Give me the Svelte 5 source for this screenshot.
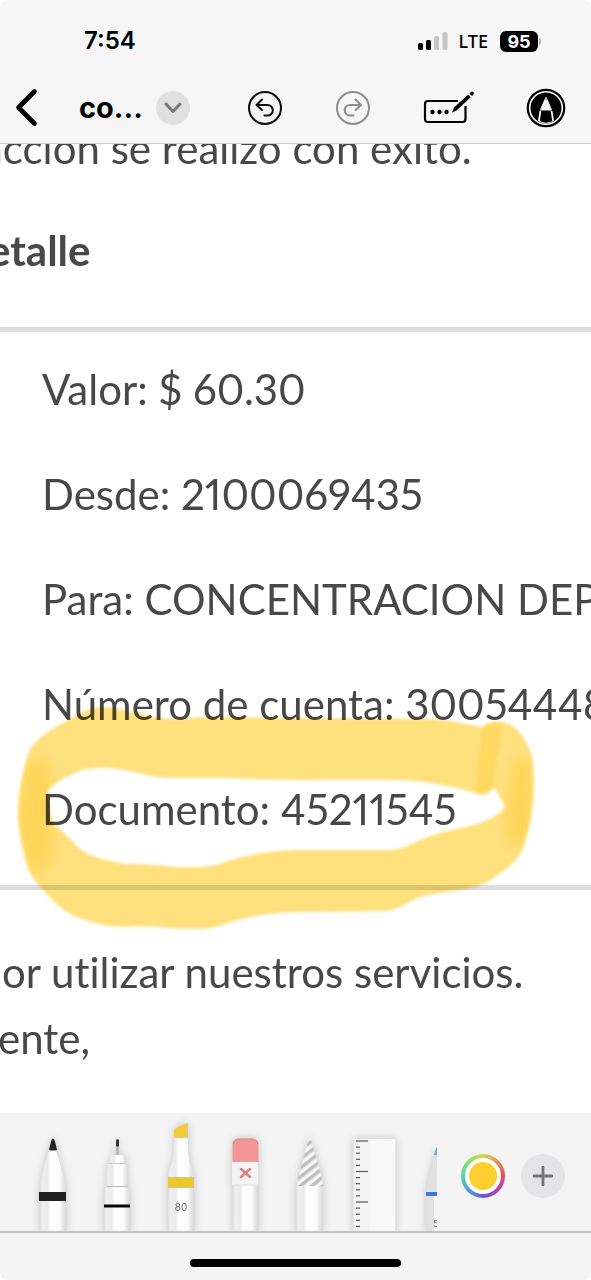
<script>
  const rows = [
    ['Valor', '$ 60.30'],
    ['Desde', '2100069435'],
    ['Para', 'CONCENTRACION DEPORTIVA'],
    ['Número de cuenta', '3005444804']
  ];
  const ticks = Array.from({ length: 15 }, (_, i) => ({ y: 28 + i * 6.1, long: i % 5 === 0 }));
</script>

<main class="screen">
  <header>
    <div class="status">
      <time>7:54</time>
      <div class="indicators">
        <svg width="30" height="20" viewBox="0 0 30 20" aria-hidden="true">
          <rect x="0" y="12" width="5" height="7" rx="1.5" />
          <rect x="8" y="9" width="5" height="10" rx="1.5" />
          <rect x="16" y="5" width="5" height="14" rx="1.5" fill="#c6c6c6" />
          <rect x="24.500" y="1" width="5" height="18" rx="1.500" fill="#c6c6c6" />
        </svg>
        <span class="network">LTE</span>
        <span class="battery">95</span>
      </div>
    </div>
    <nav>
      <button class="back" aria-label="Back">
        <svg width="24" height="40" viewBox="0 0 24 40"><path d="M20.500 3.500 4.500 19.500l16 16" fill="none" stroke="#000" stroke-width="4.600" stroke-linecap="round" stroke-linejoin="round" /></svg>
      </button>
      <span class="title">co...</span>
      <button class="more" aria-label="Document options">
        <svg width="18" height="12" viewBox="0 0 18 12"><path d="m2 2 7 7.500L16 2" fill="none" stroke="#77777a" stroke-width="3" stroke-linecap="round" stroke-linejoin="round" /></svg>
      </button>
      <div class="actions">
        <button aria-label="Undo">
          <svg width="36" height="36" viewBox="0 0 36 36" fill="none" stroke="#0b0b0b" stroke-width="2" stroke-linecap="round" stroke-linejoin="round">
            <circle cx="18" cy="18" r="16" /><path d="M15 9.500 9.500 15l5.500 5M10 15h10.500a5.300 5.300 0 0 1 0 10.600H17.500" />
          </svg>
        </button>
        <button aria-label="Redo">
          <svg width="36" height="36" viewBox="0 0 36 36" fill="none" stroke="#8d8d8d" stroke-width="2" stroke-linecap="round" stroke-linejoin="round">
            <circle cx="18" cy="18" r="16" /><path d="m20.500 9.500 5.500 5.500-5.500 5M25.500 15H15a5.300 5.300 0 0 0 0 10.600h3.500" />
          </svg>
        </button>
        <button aria-label="Fill form">
          <svg width="52" height="36" viewBox="0 0 52 36">
            <path d="M36 11H6a3 3 0 0 0-3 3v15a3 3 0 0 0 3 3h34.500a3 3 0 0 0 3-3V16" fill="none" stroke="#000" stroke-width="2.200" />
            <circle cx="10.500" cy="22" r="2.200" /><circle cx="17.500" cy="22" r="2.200" /><circle cx="24.500" cy="22" r="2.200" />
            <path d="m30 22.500 2-5L46.200 4.500l2.500 2.700L34.500 20.500z" /><path d="m47.500 3.400 1.300-1.300a1.700 1.700 0 0 1 2.500 2.500L50 5.900z" />
          </svg>
        </button>
        <button aria-label="Markup">
          <svg width="40" height="40" viewBox="0 0 40 40">
            <circle cx="20" cy="20" r="18.200" fill="#fff" stroke="#000" stroke-width="2.200" /><circle cx="20" cy="20" r="15.500" />
            <path d="m20 8.500 2.300 4.500 3.900 9.500H13.800L17.700 13z" fill="#f6f6f6" />
            <path d="m13.500 23-1.500 9.800c2.200 1.800 5 2.700 8 2.700s5.800-.9 8-2.700L26.500 23h-1.800l1.500 10.300a15 15 0 0 1-12.400 0L15.300 23z" fill="#f6f6f6" />
            <path d="M18.700 12h2.600L20 9z" fill="#aaa" />
          </svg>
        </button>
      </div>
    </nav>
  </header>

  <article>
    <p class="notice">acción se realizó con éxito.</p>
    <h1>etalle</h1>
    <div class="details">
      {#each rows as [name, value]}
        <p>{name}: {value}</p>
      {/each}
      <div class="marked">
        <p>Documento: 45211545</p>
        <svg class="highlight" width="540" height="250" viewBox="0 690 540 250" aria-hidden="true">
          <defs>
            <filter id="soft" x="-5%" y="-5%" width="110%" height="110%"><feGaussianBlur stdDeviation="1.500" /></filter>
            <filter id="softer" x="-40%" y="-20%" width="180%" height="140%"><feGaussianBlur stdDeviation="6" /></filter>
            <clipPath id="loop">
              <path clip-rule="evenodd" d="M72 718C85 709 95 707 105 707C118 708 125 711 135 712C155 718 165 720 190 718C220 716 250 718 300 718L420 719C455 719 470 726 483 727C490 720 500 720 508 724C520 728 531 746 533 762C535 785 534 812 526 838C523 852 518 860 505 870C493 879 482 886 470 888C445 893 434 893 420 897C405 903 398 911 380 911L300 912C270 912 240 918 222 925C210 930 190 929 170 928C145 925 125 928 110 926C90 923 70 916 60 907C44 892 30 879 26 862C20 840 16 820 19 795C22 775 26 758 31 748C42 733 58 726 72 718ZM48 790C57 781 76 770 88 769C112 765 130 772 155 777C175 779 220 777 250 779C300 781 350 779 400 780C440 782 455 788 484 795Q490 792 494 787L505 806Q503 812 490 819C470 828 452 829 440 833C420 838 408 849 390 850L300 850C270 850 242 856 225 862C213 868 195 867 175 867C145 863 125 865 115 862C100 858 90 857 79 848C70 839 62 831 54 824C48 812 50 804 48 790Z" />
            </clipPath>
          </defs>
          <g filter="url(#soft)">
            <g clip-path="url(#loop)">
              <rect x="0" y="690" width="540" height="250" fill="#fee07d" />
              <g fill="#ffd65a" filter="url(#softer)">
                <path d="M22 765 46 755 54 790 52 860 32 880 18 830z" />
                <path d="M515 758H532L534 835L508 848 506 805z" />
              </g>
              <path d="M483 724h17c3 8-2 28-6 48l-1 22H475z" fill="#fed85f" />
            </g>
          </g>
        </svg>
      </div>
    </div>
    <p class="thanks">or utilizar nuestros servicios.</p>
    <p class="closing">ente,</p>
  </article>

  <footer>
    <div class="toolbar">
      <div class="tools">
        <button aria-label="Pen">
          <svg width="64" height="118" viewBox="0 0 64 118">
            <defs>
              <linearGradient id="barrel"><stop offset="0" stop-color="#e0e0e0" /><stop offset=".1" stop-color="#f0f0f0" /><stop offset=".28" stop-color="#e9e9e9" /><stop offset=".42" stop-color="#fff" /><stop offset=".75" stop-color="#fbfbfb" /><stop offset=".85" stop-color="#ececec" /><stop offset="1" stop-color="#d8d8d8" /></linearGradient>
            </defs>
            <path d="M28 37h7c3 12 10 29 10 43v38H19V80c0-14 6-31 9-43z" fill="url(#barrel)" />
            <path d="M28 37c1-5 2-9 3-11q1-1 2 0c1 2 2 6 3 11q-4 1-8 0z" fill="#242424" />
            <path d="M18 79h27v9H18z" fill="#202020" />
          </svg>
        </button>
        <button aria-label="Fine liner">
          <svg width="64" height="118" viewBox="0 0 64 118">
            <path d="M31 42h3V27l-.500-1h-2l-.500 1z" fill="#b5b5b5" /><rect x="31" y="26.500" width="3" height="7" rx="1" fill="#333" />
            <path d="M26 42h14l1 9H24z" fill="url(#barrel)" /><path d="M24 50.500h18" stroke="#ccc" />
            <path d="M23 51h19l1 22H21z" fill="url(#barrel)" /><path d="M22 73.500h21" stroke="#bbb" />
            <path d="M20 74h24l1 12v32H19V86z" fill="url(#barrel)" /><path d="M19 91.500h26v3H19z" fill="#080808" />
          </svg>
        </button>
        <button aria-label="Highlighter, 80 percent" aria-pressed="true">
          <svg width="64" height="118" viewBox="0 0 64 118">
            <path d="M25 25h14c0 12 0 20 3 28 3 6 3 14 3 23v42H19V76c0-9 0-17 3-23 3-8 3-16 3-28z" fill="url(#barrel)" />
            <path d="M25 25v-7q0-2 2-3l11-5q1 0 1 1v14z" fill="#f2ca3a" /><path d="M19 64h26v11H19z" fill="#eac831" />
            <text x="32" y="98" text-anchor="middle" font-size="10" fill="#666">80</text>
          </svg>
        </button>
        <button aria-label="Eraser">
          <svg width="64" height="118" viewBox="0 0 64 118">
            <path d="M20 48h25v70H20z" fill="url(#barrel)" /><path d="M19 48h26v24H19z" fill="#f3f3f3" /><path d="M20 72h25" stroke="#ddd" />
            <path d="M19.500 49V32q0-6 6-6h14q6 0 6 6v17z" fill="#f29795" /><path d="M20 31q1-5 6-5h13q5 0 6 5" fill="none" stroke="#d98482" />
            <path d="m28 56 9 8m0-8-9 8" stroke="#dd8080" stroke-width="2.500" stroke-linecap="round" />
          </svg>
        </button>
        <button aria-label="Lasso">
          <svg width="64" height="118" viewBox="0 0 64 118">
            <defs>
              <pattern id="stripes" width="7" height="7" patternUnits="userSpaceOnUse" patternTransform="rotate(-38)"><rect width="7" height="7" fill="#f8f8f8" /><rect width="7" height="3.500" fill="#bebebe" /></pattern>
            </defs>
            <path d="M19 72h27v46H19z" fill="url(#barrel)" /><path d="M32 25h1.500C38 42 44 58 46 73H20c2-15 8-31 12-48z" fill="url(#stripes)" />
          </svg>
        </button>
        <button aria-label="Ruler">
          <svg width="64" height="118" viewBox="0 0 64 118">
            <path d="M12 26h42v92H12z" fill="#f8f8f8" /><path d="M12 26h17v92H12z" fill="#f3f3f3" /><path d="M12.500 26v92M54.500 26v92" stroke="#e3e3e3" />
            {#each ticks as tick}
              <path d="M15 {tick.y}h{tick.long ? 12 : 4}" stroke="#555" stroke-width="1.200" />
            {/each}
          </svg>
        </button>
        <button aria-label="Pencil">
          <svg width="64" height="118" viewBox="0 0 64 118">
            <path d="M31 38h2c4 15 8 29 10 42v38H21V80c2-13 6-27 10-42z" fill="#e1e1e1" /><path d="M29 80h8v38h-8z" fill="#f7f7f7" />
            <path d="M29 42q2-8 3-8t3 8z" fill="#75a7dd" /><path d="M21 79h22v4H21z" fill="#397be0" />
            <text x="28" y="114" font-size="9" fill="#777">50</text>
          </svg>
        </button>
      </div>
      <button class="color" aria-label="Color"><span></span></button>
      <button class="add" aria-label="Add">
        <svg width="20" height="20" viewBox="0 0 20 20"><path d="M10 1v18M1 10h18" stroke="#747477" stroke-width="2.800" stroke-linecap="round" /></svg>
      </button>
    </div>
    <div class="home"><span></span></div>
  </footer>
</main>

<style>
  :global(body) { margin: 0; background: #fff; }
  .screen { min-height: 100vh; display: flex; flex-direction: column; overflow: hidden; font-family: Inter, sans-serif; color: #000; }
  button { border: 0; padding: 0; background: none; display: flex; align-items: center; justify-content: center; flex: none; }
  svg { display: block; flex: none; }
  p, h1 { margin: 0; }

  header { position: relative; z-index: 1; background: #f6f6f6; border-bottom: 1px solid #cbcbcb; border-radius: 8px 8px 0 0; }
  .status { display: flex; align-items: center; justify-content: space-between; height: 48px; padding: 17px 50px 0 84px; }
  time { font-size: 24px; line-height: 48px; font-weight: 600; }
  .indicators { display: flex; align-items: center; }
  .network { margin: 0 12px 0 11px; font: 500 18px/24px "Noto Sans", sans-serif; }
  .battery { position: relative; width: 38px; height: 21px; border-radius: 6px; background: #000; color: #fff; font-size: 18px; line-height: 21px; font-weight: 700; text-align: center; margin-right: 3px; }
  .battery::after { content: ""; position: absolute; right: -3px; top: 7px; width: 2px; height: 7px; border-radius: 0 2px 2px 0; background: #bbb; }
  nav { display: flex; align-items: center; height: 78px; padding: 8px 25px 0 14px; box-sizing: border-box; }
  .title { margin-left: 41px; width: 62px; font-size: 29px; line-height: 36px; font-weight: 700; white-space: nowrap; }
  .more { margin-left: 15px; width: 34px; height: 34px; border-radius: 50%; background: #e0e0e1; }
  .actions { flex: 1; margin-left: 57px; display: flex; align-items: center; justify-content: space-between; }

  article { flex: 1; background: #fff; color: #484848; font: 400 42px/66px Lato, "Noto Sans", sans-serif; font-variant-ligatures: none; font-variant-numeric: proportional-nums; white-space: nowrap; padding-bottom: 42px; }
  .notice { margin: -29px 0 0 -18px; }
  h1 { margin: 36px 0 44px -12px; font-size: 42px; line-height: 66px; font-weight: 700; }
  .details { display: flex; flex-direction: column; gap: 39px; padding: 24px 0 43px 42px; border-top: 5px solid #dedede; border-bottom: 5px solid #dedede; }
  .marked { position: relative; }
  .highlight { position: absolute; left: -42px; top: -86px; mix-blend-mode: multiply; pointer-events: none; }
  .thanks { margin: 49px 0 0 2px; }
  .closing { margin-left: -2px; }

  footer { position: relative; background: #f4f4f4; border-radius: 0 0 8px 8px; }
  .toolbar { display: flex; align-items: center; height: 118px; padding-right: 26px; border-bottom: 2px solid #c3c3c3; }
  .tools { flex: 1; min-width: 0; display: flex; overflow: hidden; padding-left: 21px; margin-right: 24px; }
  .tools button { width: 64px; height: 118px; }
  .tools svg { filter: drop-shadow(0 0 4px #0003); }
  .tools text { font-family: Inter, sans-serif; }
  .color { width: 44px; height: 44px; margin: 8px 16px 0 0; border-radius: 50%; background: conic-gradient(#d4d84b, #ed9150 12%, #df5158 24%, #bb43b0 36%, #7650df 48%, #499be2 62%, #54dba1 76%, #8fdf67 88%, #d4d84b); }
  .color span { width: 28px; height: 28px; border: 4px solid #fff; border-radius: 50%; background: #ffce2f; }
  .add { width: 44px; height: 44px; margin-top: 8px; border-radius: 50%; background: #e4e4e6; }
  .home { display: flex; justify-content: center; padding: 26px 0 13px; }
  .home span { width: 211px; height: 8px; border-radius: 4px; background: #000; }
</style>
